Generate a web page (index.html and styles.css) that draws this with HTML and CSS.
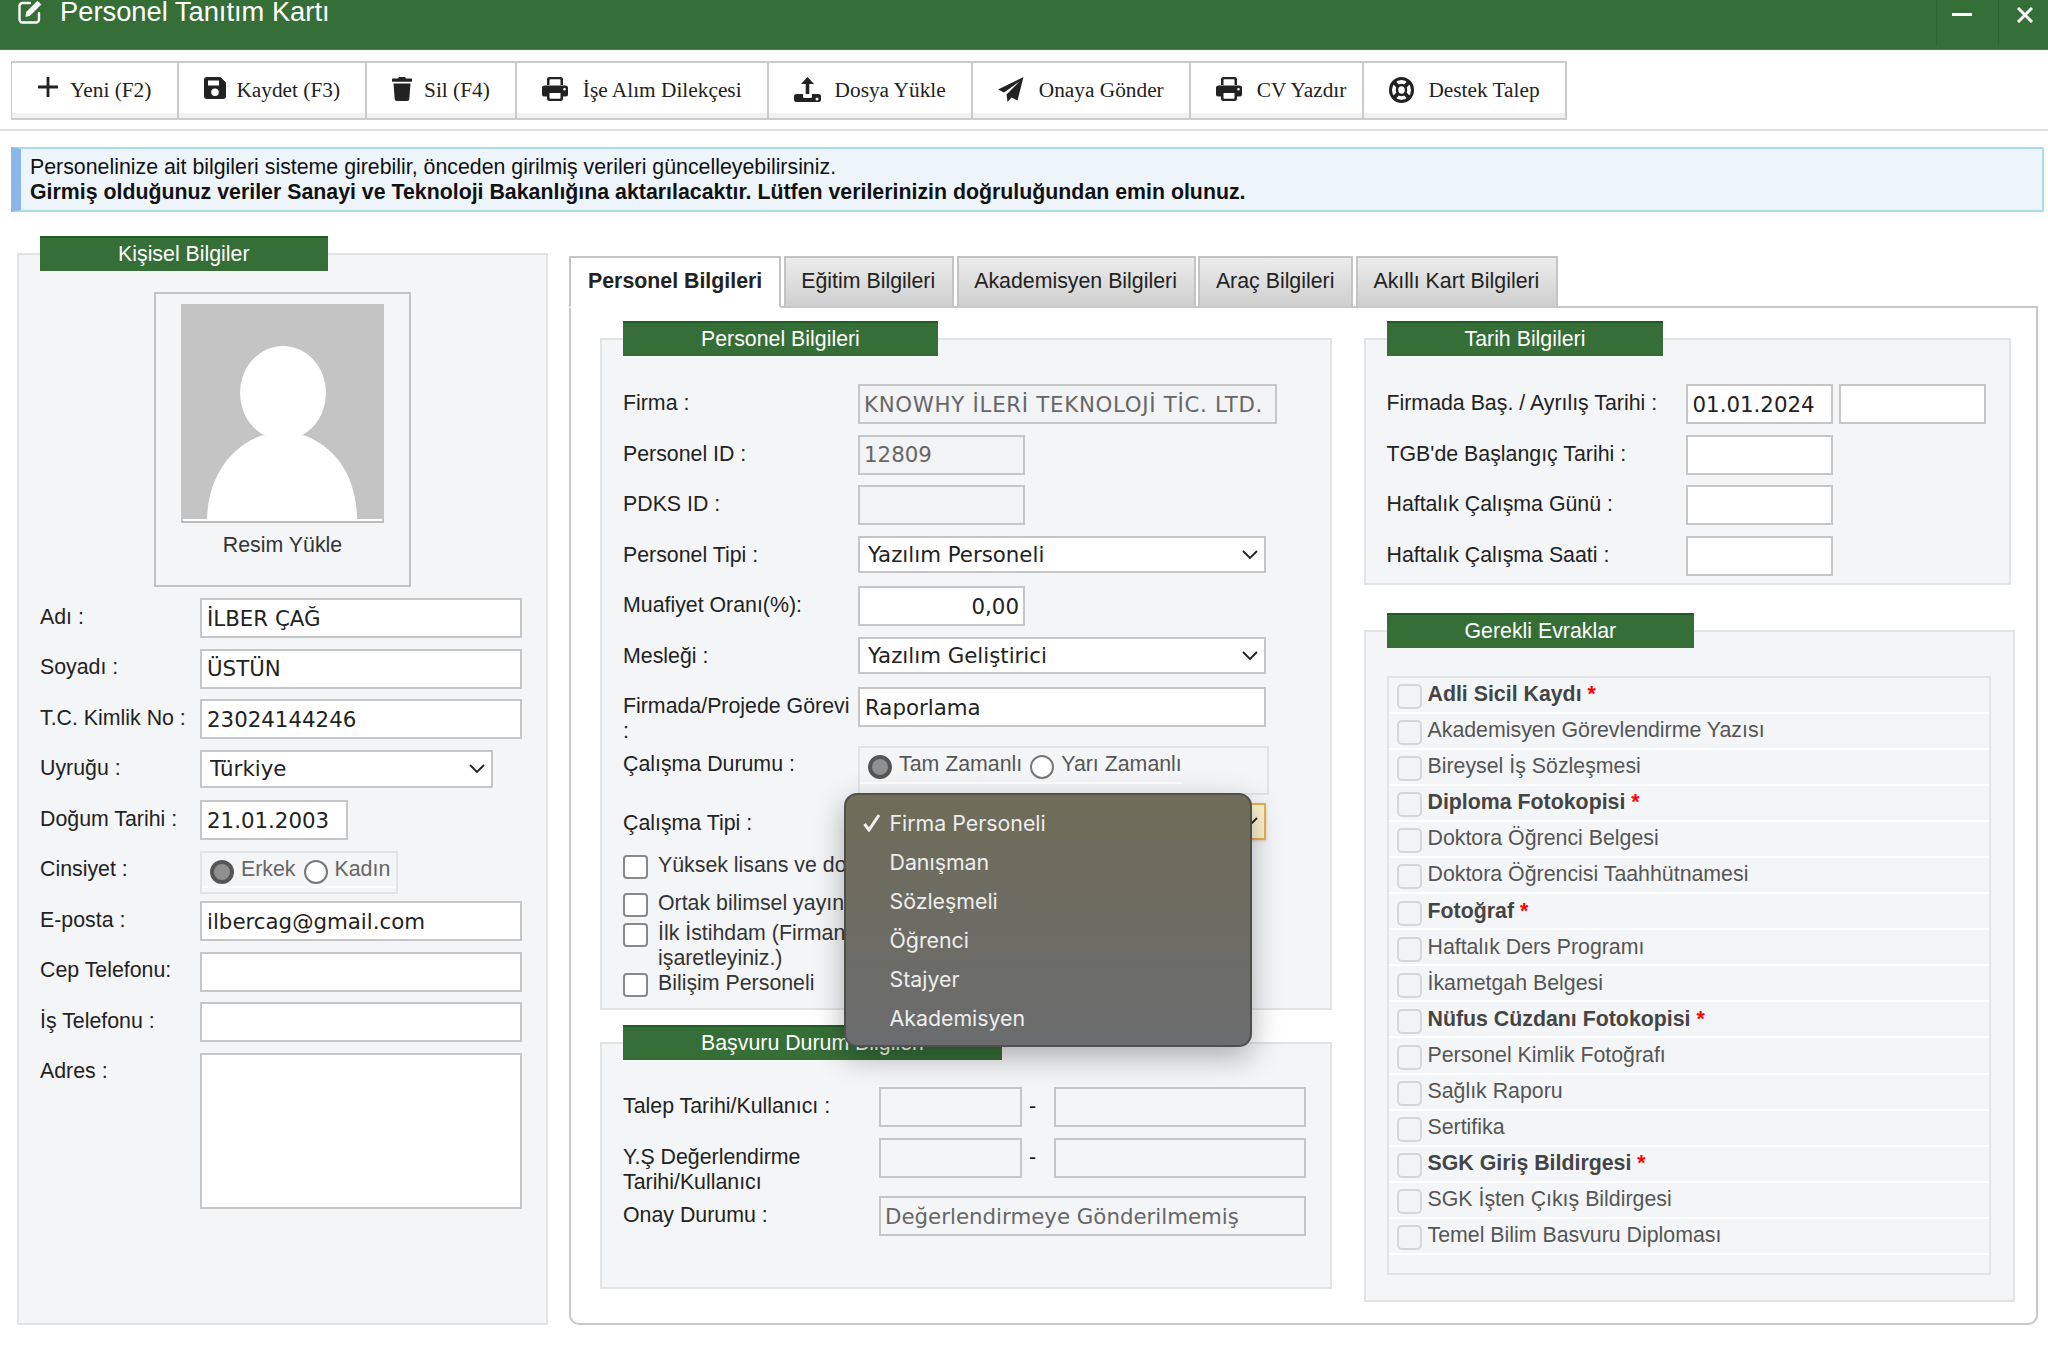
FILE: index.html
```html
<!DOCTYPE html>
<html lang="tr">

<head>
    <title>Personel Tanıtım Kartı</title>
    <meta charset="UTF-8">
    <link rel="stylesheet" href="styles.css">
</head>

<body>
    <header class="titlebar">
        <svg class="title-icon" viewBox="0 0 24 24" fill="none" stroke="#fff" stroke-width="2.4" stroke-linecap="round" stroke-linejoin="round">
            <path d="M12 3H4.5A3 3 0 0 0 1.5 6v13.5a3 3 0 0 0 3 3H18a3 3 0 0 0 3-3V13"/>
            <path d="M8 16l.9-4.2L19.5 1.2l3.3 3.3L12.2 15.1z" fill="#fff" stroke-width="1"/>
        </svg>
        <h1>Personel Tanıtım Kartı</h1>
        <div class="win-buttons">
            <span class="win-btn win-min"><i></i></span>
            <span class="win-btn win-close">
                <svg viewBox="0 0 16 16" stroke="#fff" stroke-width="3"><path d="M1 1l14 14M15 1L1 15"/></svg>
            </span>
        </div>
    </header>

    <nav class="toolbar">
        <button type="button" class="tool tool-first">
            <span class="tool-icon">
                <svg width="20" height="20" viewBox="0 0 20 20" fill="#222"><path d="M8.6 0h2.8v8.6H20v2.8h-8.6V20H8.6v-8.6H0V8.6h8.6z"/></svg>
            </span>Yeni (F2)
        </button>
        <button type="button" class="tool">
            <span class="tool-icon">
                <svg width="22" height="22" viewBox="0 0 22 22" fill="#222"><path fill-rule="evenodd" d="M3 0h13.5L22 5.5V19a3 3 0 0 1-3 3H3a3 3 0 0 1-3-3V3a3 3 0 0 1 3-3zm1 3.5v5h11v-5zM11 11.5a3.8 3.8 0 1 0 0 7.6 3.8 3.8 0 0 0 0-7.6z"/></svg>
            </span>Kaydet (F3)
        </button>
        <button type="button" class="tool">
            <span class="tool-icon">
                <svg width="20" height="24" viewBox="0 0 20 24" fill="#222"><path d="M7 0h6l1 1.6h5.4a.6.6 0 0 1 .6.6v2a.6.6 0 0 1-.6.6H.6a.6.6 0 0 1-.6-.6v-2a.6.6 0 0 1 .6-.6H6zM1.5 6.5h17L17.3 22a2.2 2.2 0 0 1-2.2 2H4.900a2.2 2.2 0 0 1-2.2-2z"/></svg>
            </span>Sil (F4)
        </button>
        <button type="button" class="tool">
            <span class="tool-icon wide">
                <svg width="26" height="24" viewBox="0 0 26 24" class="print-icon"><use href="#print"/></svg>
            </span>İşe Alım Dilekçesi
        </button>
        <button type="button" class="tool">
            <span class="tool-icon wide">
                <svg width="27" height="25" viewBox="0 0 27 25" fill="#222"><path d="M13.500 0l6.500 7h-4.700v10h-3.600V7H7z"/><path fill-rule="evenodd" d="M2.500 17H9v2.500a1.500 1.500 0 0 0 1.500 1.500h6A1.500 1.500 0 0 0 18 19.500V17h6.500a2.500 2.500 0 0 1 2.500 2.500v3a2.500 2.500 0 0 1-2.500 2.500h-22A2.500 2.500 0 0 1 0 22.500v-3A2.500 2.500 0 0 1 2.500 17zm20.500 3.500a1.500 1.500 0 1 0 0 3 1.500 1.500 0 0 0 0-3z"/></svg>
            </span>Dosya Yükle
        </button>
        <button type="button" class="tool">
            <span class="tool-icon wide">
                <svg width="26" height="25" viewBox="0 0 26 25" fill="#222"><path d="M25.500 0L19.500 23.500 13.500 20.500 9.500 25 8.500 17.500 22 4 6 15.500 0 12.500z"/></svg>
            </span>Onaya Gönder
        </button>
        <button type="button" class="tool tool-cv">
            <span class="tool-icon wide">
                <svg width="26" height="24" viewBox="0 0 26 24" class="print-icon"><use href="#print"/></svg>
            </span>CV Yazdır
        </button>
        <button type="button" class="tool">
            <span class="tool-icon help">
                <svg width="25" height="26" viewBox="0 0 25 26" fill="none" stroke="#222"><ellipse cx="12.500" cy="13" rx="11" ry="11.500" stroke-width="3"/><ellipse cx="12.500" cy="13" rx="4.500" ry="5" stroke-width="2.500"/><path d="M4.500 4.500l4.500 5M20.500 4.500l-4.500 5M4.500 21.500l4.500-5M20.500 21.500l-4.500-5" stroke-width="4"/></svg>
            </span>Destek Talep
        </button>
    </nav>
    <svg class="defs" width="0" height="0">
        <symbol id="print" viewBox="0 0 26 24">
            <path fill="#222" fill-rule="evenodd" d="M7.500 0h11A2.500 2.500 0 0 1 21 2.500V8h-2.500V3a.8.8 0 0 0-.8-.8H8.300a.8.8 0 0 0-.8.8v5H5V2.500A2.500 2.500 0 0 1 7.500 0zM2.500 8.500h21A2.500 2.500 0 0 1 26 11v6.500a2 2 0 0 1-2 2h-3v2A2.500 2.500 0 0 1 18.500 24h-11A2.500 2.500 0 0 1 5 21.500v-2H2a2 2 0 0 1-2-2V11a2.500 2.500 0 0 1 2.500-2.500zM7.500 16v5a.8.800 0 0 0 .8.800h9.400a.8.800 0 0 0 .8-.8v-5zM22.500 11a1.300 1.300 0 1 0 0 2.600 1.300 1.300 0 0 0 0-2.600z"/>
        </symbol>
    </svg>
    <hr class="rule">

    <div class="info">
        Personelinize ait bilgileri sisteme girebilir, önceden girilmiş verileri güncelleyebilirsiniz.<br>
        <b>Girmiş olduğunuz veriler Sanayi ve Teknoloji Bakanlığına aktarılacaktır. Lütfen verilerinizin doğruluğundan emin olunuz.</b>
    </div>

    <main class="content">
        <section class="panel panel-person">
            <h2 class="legend">Kişisel Bilgiler</h2>
            <div class="photo-box">
                <svg class="photo" width="203" height="219" viewBox="0 0 203 219">
                    <rect width="203" height="219" fill="#c4c4c4"/>
                    <ellipse cx="102" cy="89" rx="43" ry="47" fill="#fff"/>
                    <path d="M26 216C27 172 50 142 82 131Q102 138 122 131C154 142 176 172 176 216z" fill="#fff"/>
                    <rect x="2" y="215" width="199" height="2" fill="#fff"/>
                    <rect x="0" y="217" width="203" height="2" fill="#bbb"/>
                </svg>
                <div class="photo-label">Resim Yükle</div>
            </div>
            <div class="form form-person">
                <div class="row"><label>Adı :</label><input class="w-full" value="İLBER ÇAĞ"></div>
                <div class="row"><label>Soyadı :</label><input class="w-full" value="ÜSTÜN"></div>
                <div class="row"><label>T.C. Kimlik No :</label><input class="w-full" value="23024144246"></div>
                <div class="row"><label>Uyruğu :</label>
                    <div class="select select-uyruk">
                        <select><option>Türkiye</option></select>
                        <svg viewBox="0 0 16 9" fill="none" stroke="#222" stroke-width="1.800"><path d="M1 1l7 7 7-7"/></svg>
                    </div>
                </div>
                <div class="row"><label>Doğum Tarihi :</label><input class="w-date" value="21.01.2003"></div>
                <div class="row"><label>Cinsiyet :</label>
                    <div class="radio-box radio-box-gender">
                        <div class="radio-line">
                            <input type="radio" name="cinsiyet" checked><span>Erkek</span>
                            <input type="radio" name="cinsiyet"><span>Kadın</span>
                        </div>
                    </div>
                </div>
                <div class="row"><label>E-posta :</label><input class="w-full" value="ilbercag@gmail.com"></div>
                <div class="row"><label>Cep Telefonu:</label><input class="w-full"></div>
                <div class="row"><label>İş Telefonu :</label><input class="w-full"></div>
                <div class="row row-address"><label>Adres :</label><textarea class="w-full"></textarea></div>
            </div>
        </section>

        <div class="tabs-wrap">
            <div class="tabs">
                <div class="tab active">Personel Bilgileri</div>
                <div class="tab">Eğitim Bilgileri</div>
                <div class="tab">Akademisyen Bilgileri</div>
                <div class="tab">Araç Bilgileri</div>
                <div class="tab">Akıllı Kart Bilgileri</div>
            </div>
            <div class="tab-pane">
                <div class="col-left">
                    <section class="panel panel-staff">
                        <h2 class="legend">Personel Bilgileri</h2>
                        <div class="form form-staff">
                            <div class="row"><label>Firma :</label><input class="ro w-firma" value="KNOWHY İLERİ TEKNOLOJİ TİC. LTD." readonly></div>
                            <div class="row"><label>Personel ID :</label><input class="ro w-short" value="12809" readonly></div>
                            <div class="row"><label>PDKS ID :</label><input class="ro w-short" readonly></div>
                            <div class="row"><label>Personel Tipi :</label>
                                <div class="select select-wide">
                                    <select><option>Yazılım Personeli</option></select>
                                    <svg viewBox="0 0 16 9" fill="none" stroke="#222" stroke-width="1.800"><path d="M1 1l7 7 7-7"/></svg>
                                </div>
                            </div>
                            <div class="row"><label>Muafiyet Oranı(%):</label><input class="w-short num" value="0,00"></div>
                            <div class="row"><label>Mesleği :</label>
                                <div class="select select-wide">
                                    <select><option>Yazılım Geliştirici</option></select>
                                    <svg viewBox="0 0 16 9" fill="none" stroke="#222" stroke-width="1.800"><path d="M1 1l7 7 7-7"/></svg>
                                </div>
                            </div>
                            <div class="row row-gorev"><label>Firmada/Projede Görevi :</label><input class="w-wide" value="Raporlama"></div>
                            <div class="row row-durum"><label>Çalışma Durumu :</label>
                                <div class="radio-box radio-box-durum">
                                    <div class="radio-line">
                                        <input type="radio" name="durum" checked><span>Tam Zamanlı</span>
                                        <input type="radio" name="durum"><span>Yarı Zamanlı</span>
                                    </div>
                                </div>
                            </div>
                            <div class="row row-tip"><label>Çalışma Tipi :</label>
                                <div class="select select-wide select-focus">
                                    <select><option>Firma Personeli</option></select>
                                    <svg viewBox="0 0 16 9" fill="none" stroke="#222" stroke-width="1.800"><path d="M1 1l7 7 7-7"/></svg>
                                    <ul class="popup">
                                        <li class="selected">
                                            <svg viewBox="0 0 18 18" fill="none" stroke="#f0f0ee" stroke-width="3"><path d="M1.500 10l4.500 6L16 1"/></svg>
                                            Firma Personeli
                                        </li>
                                        <li>Danışman</li>
                                        <li>Sözleşmeli</li>
                                        <li>Öğrenci</li>
                                        <li>Stajyer</li>
                                        <li>Akademisyen</li>
                                    </ul>
                                </div>
                            </div>
                            <label class="check check-a"><input type="checkbox"><span>Yüksek lisans ve doktora mezunu</span></label>
                            <label class="check check-b"><input type="checkbox"><span>Ortak bilimsel yayın</span></label>
                            <label class="check check-c"><input type="checkbox"><span>İlk İstihdam (Firmanın ilk personeli ise<br>işaretleyiniz.)</span></label>
                            <label class="check"><input type="checkbox"><span>Bilişim Personeli</span></label>
                        </div>
                    </section>

                    <section class="panel panel-apply">
                        <h2 class="legend">Başvuru Durum Bilgileri</h2>
                        <div class="form form-apply">
                            <div class="row"><label>Talep Tarihi/Kullanıcı :</label><input class="blank w-a" readonly><span class="dash">-</span><input class="blank w-b" readonly></div>
                            <div class="row row-ys"><label>Y.Ş Değerlendirme<br>Tarihi/Kullanıcı</label><input class="blank w-a" readonly><span class="dash">-</span><input class="blank w-b" readonly></div>
                            <div class="row"><label>Onay Durumu :</label><input class="blank w-c" value="Değerlendirmeye Gönderilmemiş" readonly></div>
                        </div>
                    </section>
                </div>

                <div class="col-right">
                    <section class="panel panel-dates">
                        <h2 class="legend">Tarih Bilgileri</h2>
                        <div class="form form-dates">
                            <div class="row"><label>Firmada Baş. / Ayrılış Tarihi :</label><input class="w-d" value="01.01.2024"><input class="w-d second"></div>
                            <div class="row"><label>TGB'de Başlangıç Tarihi :</label><input class="w-d"></div>
                            <div class="row"><label>Haftalık Çalışma Günü :</label><input class="w-d"></div>
                            <div class="row"><label>Haftalık Çalışma Saati :</label><input class="w-d"></div>
                        </div>
                    </section>

                    <section class="panel panel-docs">
                        <h2 class="legend">Gerekli Evraklar</h2>
                        <ul class="docs">
                            <li class="req"><input type="checkbox"><span>Adli Sicil Kaydı <em>*</em></span></li>
                            <li><input type="checkbox"><span>Akademisyen Görevlendirme Yazısı</span></li>
                            <li><input type="checkbox"><span>Bireysel İş Sözleşmesi</span></li>
                            <li class="req"><input type="checkbox"><span>Diploma Fotokopisi <em>*</em></span></li>
                            <li><input type="checkbox"><span>Doktora Öğrenci Belgesi</span></li>
                            <li><input type="checkbox"><span>Doktora Öğrencisi Taahhütnamesi</span></li>
                            <li class="req"><input type="checkbox"><span>Fotoğraf <em>*</em></span></li>
                            <li><input type="checkbox"><span>Haftalık Ders Programı</span></li>
                            <li><input type="checkbox"><span>İkametgah Belgesi</span></li>
                            <li class="req"><input type="checkbox"><span>Nüfus Cüzdanı Fotokopisi <em>*</em></span></li>
                            <li><input type="checkbox"><span>Personel Kimlik Fotoğrafı</span></li>
                            <li><input type="checkbox"><span>Sağlık Raporu</span></li>
                            <li><input type="checkbox"><span>Sertifika</span></li>
                            <li class="req"><input type="checkbox"><span>SGK Giriş Bildirgesi <em>*</em></span></li>
                            <li><input type="checkbox"><span>SGK İşten Çıkış Bildirgesi</span></li>
                            <li><input type="checkbox"><span>Temel Bilim Basvuru Diploması</span></li>
                        </ul>
                    </section>
                </div>
            </div>
        </div>
    </main>
</body>

</html>
```
FILE: styles.css
```css
* {
    box-sizing: border-box;
}

body {
    margin: 0;
    background: #fff;
    color: #222;
    font-family: "Liberation Sans", Arial, sans-serif;
    font-size: 21.33px;
    line-height: 25px;
}

/* title bar */
.titlebar {
    display: flex;
    height: 50px;
    background: #366e37;
    color: #fff;
    border-bottom: 1px solid #4d7f4e;
    overflow: hidden;
}

.title-icon {
    width: 24px;
    height: 24px;
    margin: 0 18px 0 18px;
}

.titlebar h1 {
    margin: 0;
    font-size: 27.3px;
    font-weight: normal;
    line-height: 24px;
}

.win-buttons {
    display: flex;
    margin-left: auto;
    height: 46px;
}

.win-btn {
    display: block;
    width: 62px;
    border-left: 1px solid #2f6330;
}

.win-min {
    padding: 13px 26px 0 15px;
}

.win-min i {
    display: block;
    height: 3px;
    background: #fff;
}

.win-close {
    width: 50px;
    padding: 7px 0 0 18px;
}

.win-close svg {
    display: block;
    width: 16px;
    height: 16px;
}

/* toolbar */
.toolbar {
    display: inline-flex;
    margin: 11px 0 0 11px;
    height: 59px;
    border: 2px solid #ccc;
    border-left-width: 1px;
    vertical-align: top;
}

.tool {
    display: flex;
    align-items: center;
    padding: 0 25px;
    border: 0;
    border-right: 2px solid #ccc;
    background: linear-gradient(#fff 90%, #f1f1f1 90%);
    color: #222;
    font-family: "Liberation Serif", "Times New Roman", serif;
    font-size: 21.33px;
    white-space: nowrap;
}

.tool:last-child {
    border-right: 0;
}

.tool-first {
    padding: 0 26px;
}

.tool-cv {
    padding-right: 16px;
}

.tool-icon {
    display: block;
    flex: none;
    width: 32px;
    height: 26px;
    margin-top: -4px;
}

.tool-icon svg {
    display: block;
    margin-top: 1px;
}

.tool-icon.wide {
    width: 41px;
}

.tool-icon.help {
    width: 39px;
}

.defs {
    position: absolute;
}

.rule {
    margin: 9px 0 0;
    border: 0;
    height: 2px;
    background: #ddd;
}

/* info box */
.info {
    height: 65px;
    margin: 16px 4px 0 11px;
    padding: 5.5px 0 0 9px;
    background: #edf5fb;
    border: 2px solid #a8dcea;
    border-left: 10px solid #8ab6e8;
    color: #111;
}

/* layout */
.content {
    display: flex;
    align-items: flex-start;
    margin: 41px 10px 0 17px;
    gap: 21px;
}

.panel {
    background: #f4f5f7;
    border: 2px solid #e2e3e5;
}

.legend {
    width: fit-content;
    height: 35px;
    margin: -19px 0 0 21px;
    padding: 0 78px;
    background: #366e37;
    border-top: 2px solid #1f5c22;
    color: #fff;
    font-size: 21.33px;
    font-weight: normal;
    line-height: 32.5px;
    white-space: nowrap;
}

.panel-person {
    flex: none;
    width: 531px;
    height: 1072px;
}

/* photo */
.photo-box {
    width: 257px;
    height: 295px;
    margin: 21px auto 0;
    padding-top: 10px;
    border: 2px solid #c2c3c5;
    text-align: center;
}

.photo {
    display: block;
    margin: 0 auto;
}

.photo-label {
    margin-top: 10px;
    color: #333;
}

/* form rows */
.row {
    display: flex;
    height: 40px;
    margin-bottom: 10.5px;
}

.row label {
    flex: none;
    padding-top: 7px;
}

.form-person {
    margin: 11px 24px 0 21px;
}

.form-person .row label {
    width: 160px;
    padding-top: 6.5px;
}

.row-address {
    height: 156px;
}

input,
textarea,
select {
    height: 40px;
    margin: 0;
    padding: 0 5px;
    background: #fff;
    border: 2px solid #c6c6c6;
    border-radius: 0;
    color: #222;
    font-family: "DejaVu Sans", Verdana, sans-serif;
    font-size: 21.33px;
    outline: none;
}

textarea {
    height: 100%;
    resize: none;
}

.w-full {
    width: 322px;
}

.w-date {
    width: 148px;
}

.ro {
    padding-left: 4px;
    background: #f2f3f5;
    color: #666;
}

.num {
    padding-right: 4px;
    text-align: right;
}

.blank {
    padding-left: 4px;
    background: #f4f5f7;
    color: #666;
}

/* selects */
.select {
    position: relative;
    height: 37px;
}

.select select {
    display: block;
    width: 100%;
    height: 100%;
    padding: 0 8px;
    appearance: none;
}

.select > svg {
    position: absolute;
    top: 14px;
    right: 8px;
    width: 16px;
    height: 9px;
}

.select-uyruk {
    width: 293px;
    height: 38px;
}

.select-wide {
    width: 407.500px;
}

.select-focus select {
    background: #fbf5cf;
    border-color: #efb04a;
    box-shadow: 0 1px 3px rgba(0, 0, 0, .15);
}

/* radios */
.radio-box {
    background: #f4f5f7;
    border: 2px solid #e2e3e5;
    color: #666;
}

.radio-box-gender {
    width: 198px;
    height: 43px;
}

.radio-box-durum {
    width: 411px;
    height: 49px;
    color: #555;
}

.radio-line {
    display: inline-flex;
    align-items: flex-start;
    border-bottom: 2px solid #fff;
}

.radio-box-gender .radio-line {
    padding: 4px 6px 2px 8px;
}

.radio-box-durum .radio-line {
    padding: 4px 0 3px 8px;
}

.radio-line input {
    appearance: none;
    flex: none;
    width: 24px;
    height: 24px;
    margin: 3px 7px 0 0;
    padding: 0;
    background: #fff;
    border: 2px solid #777;
    border-radius: 50%;
}

.radio-line input:checked {
    background: #8f8f8f;
    border: 4px solid #555;
}

.radio-line span {
    margin-right: 8px;
}

.radio-line span:last-child {
    margin-right: 0;
}

/* personel form */
.col-left {
    flex: none;
    width: 732px;
}

.col-right {
    flex: none;
    width: 651.500px;
}

.form-staff {
    margin: 28px 0 0 21px;
}

.form-staff .row label {
    width: 235px;
    padding-right: 6px;
}

.w-firma {
    width: 419px;
    letter-spacing: .7px;
}

.w-short {
    width: 167px;
}

.w-wide {
    width: 407.500px;
}

.row-gorev {
    margin-bottom: 19px;
}

.row-durum {
    height: 49px;
    margin-bottom: 8px;
}

.form-staff .row-durum label {
    padding-top: 6px;
}

.row-tip {
    height: 38px;
    margin-bottom: 11.500px;
}

.form-staff .row-tip label {
    padding-top: 8px;
}

.check {
    display: flex;
    align-items: flex-start;
    gap: 10px;
    color: #333;
    white-space: nowrap;
}

.check input {
    appearance: none;
    flex: none;
    width: 25px;
    height: 24px;
    margin-top: 2px;
    padding: 0;
    background: #fff;
    border: 2px solid #888;
    border-radius: 4px;
}

.check-a {
    margin-bottom: 12px;
}

.check-b {
    margin-bottom: 4px;
}

/* os popup over the select */
.popup {
    position: absolute;
    z-index: 5;
    left: -14.500px;
    top: -10px;
    width: 408px;
    height: 254px;
    margin: 0;
    padding: 9px 0 0;
    list-style: none;
    background: linear-gradient(#6f6c58, #6b6c6e);
    border: 2px solid #4f4f4d;
    border-radius: 13px;
    box-shadow: 0 10px 30px rgba(0, 0, 0, .3);
    color: #eee;
    font-family: Inter, sans-serif;
    font-size: 21.33px;
}

.popup li {
    position: relative;
    height: 39px;
    padding-left: 44px;
    line-height: 39px;
}

.popup li svg {
    position: absolute;
    left: 17px;
    top: 10px;
    width: 18px;
    height: 18px;
}

/* basvuru panel */
.panel-staff {
    height: 672px;
}

.panel-apply {
    height: 247px;
    margin-top: 32px;
}

.form-apply {
    margin: 27px 0 0 21px;
}

.form-apply .row label {
    width: 256px;
}

.row-ys {
    margin-bottom: 18.500px;
}

.w-a {
    width: 143px;
}

.w-b {
    width: 252px;
}

.w-c {
    width: 427px;
}

.dash {
    width: 32px;
    padding: 7px 0 0 7px;
}

/* right column */
.panel-dates {
    width: 647.500px;
    height: 247px;
}

.form-dates {
    margin: 28px 0 0 21px;
}

.form-dates .row label {
    width: 299px;
}

.w-d {
    width: 147px;
}

.second {
    margin-left: 6.500px;
}

.panel-docs {
    height: 672.500px;
    margin-top: 44.500px;
}

.docs {
    height: 599px;
    margin: 28px 22px 0 21px;
    padding: 0;
    list-style: none;
    background: #f4f5f7;
    border: 2px solid #e2e3e5;
    color: #555;
}

.docs li {
    display: flex;
    align-items: flex-start;
    gap: 6px;
    height: 36.100px;
    padding: 4.500px 0 0 8px;
    border-bottom: 2px solid #fff;
}

.docs input {
    appearance: none;
    flex: none;
    width: 25px;
    height: 25px;
    margin: 2px 0 0;
    padding: 0;
    background: #f2f3f4;
    border: 2px solid #d6d6d6;
    border-radius: 5px;
}

.docs .req {
    color: #444;
    font-weight: bold;
}

.docs em {
    color: #f00;
    font-style: normal;
}

/* tabs */
.tabs-wrap {
    flex: none;
    width: 1469px;
    margin-top: 3px;
}

.tabs {
    position: relative;
    display: flex;
    gap: 2.500px;
    height: 52px;
    margin-bottom: -2px;
}

.tab {
    padding: 11px 17px 0 15.500px;
    background: linear-gradient(#ececec, #cfcfcf);
    border: 2px solid #c4c4c4;
    border-bottom: 2px solid #c8c8c8;
    color: #222;
    white-space: nowrap;
}

.tab.active {
    padding-left: 17px;
    background: #fff;
    border-bottom-color: #fff;
    font-weight: bold;
}

.tab-pane {
    display: flex;
    gap: 31.500px;
    height: 1019px;
    padding: 30px 0 0 29px;
    border: 2px solid #c8c8c8;
    border-radius: 0 0 10px 10px;
}
```
